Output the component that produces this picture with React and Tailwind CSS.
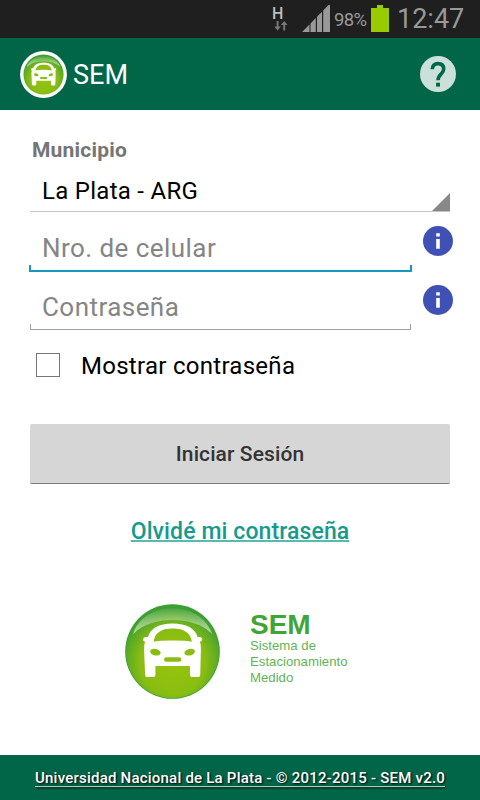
import { useState } from 'react';

function CarBadge({ id, className, ring }) {
  return (
    <svg viewBox="30 27 285 286" className={className}>
      <defs>
        <radialGradient id={`${id}-fill`} cx="50%" cy="62%" r="58%">
          <stop offset="0" stopColor="#97c40c" />
          <stop offset="0.6" stopColor="#8abd12" />
          <stop offset="0.85" stopColor="#5cab25" />
          <stop offset="1" stopColor="#3c9f31" />
        </radialGradient>
        <linearGradient id={`${id}-shine`} x1="0" y1="0" x2="0" y2="1">
          <stop offset="0" stopColor="#ffffff" stopOpacity="0.08" />
          <stop offset="1" stopColor="#ffffff" stopOpacity="0.6" />
        </linearGradient>
      </defs>
      <circle cx="172.5" cy="170" r="142.5" fill={ring ? '#ffffff' : '#3c9f31'} />
      <circle cx="172.5" cy="170" r={ring ? 122 : 140} fill={`url(#${id}-fill)`} />
      <g transform={ring ? 'translate(24.5 24) scale(0.86)' : undefined}>
        <path
          d="M54 118C68 70 116 40 172 40s104 30 120 78c-12-14-33-27-58-34-42-12-86-11-124 0-22 7-42 18-56 34z"
          fill={`url(#${id}-shine)`}
        />
        <path
          fill="#ffffff"
          fillRule="evenodd"
          d="M99 126C106 101 131 86 173 86s67 15 75 40h8q7 2 6 8-1 6-7 7 4 9 3 25l-2 73q0 8-8 8h-15q-8 0-8-8v-25H121v25q0 8-8 8H98q-8 0-8-8l-3-73q-1-16 3-25-6-1-6-7t6-8zM116 141C119 115 137 101 173 101s54 14 58 40q-14-4-58-4t-57 4z"
        />
      </g>
      <g transform={ring ? 'translate(24.5 24) scale(0.86)' : undefined} fill="#8abd12">
        <ellipse cx="121" cy="172" rx="16" ry="10" transform="rotate(12 121 172)" />
        <ellipse cx="224" cy="172" rx="16" ry="10" transform="rotate(-12 224 172)" />
        <rect x="147" y="187" width="52" height="14" rx="7" />
      </g>
    </svg>
  );
}

function InfoIcon() {
  return (
    <svg viewBox="0 0 30 30" className="w-[30px] h-[30px]">
      <circle cx="15" cy="15" r="15" fill="#3f51b5" />
      <path d="M13.2 7.3h3.6v3.1h-3.6zM13.2 13h3.6v9.7h-3.6z" fill="#ffffff" />
    </svg>
  );
}

function StatusBar() {
  return (
    <div className="h-[38px] bg-[#1f1f1f] flex items-start text-[#999999]">
      <div className="w-[18px] ml-[271px] pt-[5px] flex flex-col">
        <span className="pl-px text-[16px] leading-[17px] font-medium text-[#bdbdbd]">H</span>
        <svg viewBox="0 0 14 10" className="w-[14px] h-[10px] ml-[3px] -mt-px" fill="#777777">
          <path d="M2.6 0h2v5.5H7L3.6 9.5.2 5.5h2.4zM9.2 9.5h2V4h2.4L10.2 0 6.8 4h2.4z" />
        </svg>
      </div>
      <svg viewBox="0 0 29 28" className="w-[29px] h-[28px] ml-[13px] mt-[4px]" fill="#999999">
        <path d="M0 28L7.5 20.5V28zM8.5 19.5L13.8 14V28H8.5zM15 12.8L20 7.8V28h-5zM21.2 6.6L26 1.5q2-1.6 2 .5V28h-6.8z" />
      </svg>
      <span className="ml-[3px] mt-[9px] w-[36px] text-[18.5px] leading-[22px] tracking-[-0.6px]">98%</span>
      <svg viewBox="0 0 18 27" className="w-[18px] h-[27px] mt-[5px] ml-px" fill="#99cc00">
        <path d="M6 0h6v3h6v24H0V3h6z" />
      </svg>
      <span className="ml-[8px] mt-[3px] text-[27px] leading-[32px] whitespace-nowrap">12:47</span>
    </div>
  );
}

function Field({ label, type, active, value, onChange }) {
  return (
    <div className="flex items-start">
      <div className="w-[383px] flex flex-col">
        <input
          type={type}
          value={value}
          onChange={onChange}
          placeholder={label}
          className="h-[39px] pt-[5px] pl-[13px] text-[26px] tracking-[0.45px] outline-none bg-transparent placeholder:text-[#858585] placeholder:opacity-100"
        />
        <div
          className={
            active
              ? 'h-[7px] border-x-2 border-b-2 border-[#1896bd]'
              : 'h-[6px] mx-px border-x border-b border-[#a0a0a0]'
          }
        />
      </div>
      <div className="ml-[11px]">
        <InfoIcon />
      </div>
    </div>
  );
}

export default function App() {
  const [phone, setPhone] = useState('');
  const [password, setPassword] = useState('');
  const [showPassword, setShowPassword] = useState(false);

  return (
    <div className="w-[480px] h-[800px] flex flex-col overflow-hidden bg-white font-[Roboto,sans-serif] text-black">
      <StatusBar />

      <header className="h-[72px] bg-[#006647] flex items-center pl-[20px] pr-[24px]">
        <CarBadge id="header" ring className="w-[47px] h-[47px]" />
        <h1 className="ml-[6px] pt-[2px] text-[27px] leading-[32px] text-white">SEM</h1>
        <svg viewBox="0 0 36 36" className="w-[36px] h-[36px] ml-auto">
          <circle cx="18" cy="18" r="18" fill="#cce0da" />
          <path d="M12.3 13.3c0-3.7 2.2-5.7 5.7-5.7s5.7 2 5.7 5.4c0 4.8-5.7 5.2-5.7 11.3" fill="none" stroke="#006647" strokeWidth="3.6" />
          <path d="M16.1 26.7h3.9v3.9h-3.9z" fill="#006647" />
        </svg>
      </header>

      <main className="flex-1 flex flex-col">
        <label className="mt-[28px] ml-[32px] text-[21px] leading-[24px] tracking-[0.2px] font-bold text-[#757575]">
          Municipio
        </label>

        {/* Spinner */}
        <div className="mt-[11px] ml-[30px] w-[420px] h-[39px] flex justify-between border-b border-[#c4c4c4]">
          <span className="pl-[12px] pt-[2px] text-[24px] leading-[32px] tracking-[0.28px]">La Plata - ARG</span>
          <svg viewBox="0 0 18 18" className="w-[18px] h-[18px] self-end" fill="#888888">
            <path d="M18 0v18H0z" />
          </svg>
        </div>

        <div className="mt-[14px] ml-[29px] flex flex-col gap-[13px]">
          <Field label="Nro. de celular" type="text" active value={phone} onChange={(e) => setPhone(e.target.value)} />
          <Field
            label="Contraseña"
            type={showPassword ? 'text' : 'password'}
            value={password}
            onChange={(e) => setPassword(e.target.value)}
          />
        </div>

        <label className="mt-[19px] ml-[36px] h-[32px] flex items-center">
          <input
            type="checkbox"
            checked={showPassword}
            onChange={(e) => setShowPassword(e.target.checked)}
            className="appearance-none w-[24px] h-[24px] border border-[#777777] checked:bg-[#1896bd]"
          />
          <span className="ml-[21px] pt-[2px] text-[24px] leading-[32px] tracking-[0.28px]">Mostrar contraseña</span>
        </label>

        <button className="mt-[43px] mx-[30px] h-[60px] shrink-0 rounded-[2px] bg-[#d6d6d6] border-b border-[#7e7e7e] pt-[3px] text-[21px] tracking-[0.1px] font-medium text-[#333333]">
          Iniciar Sesión
        </button>

        <a className="mt-[34px] self-center text-[23px] leading-[28px] tracking-[0.1px] font-medium text-[#149b8c] underline decoration-[#149b8c]/70 decoration-2 underline-offset-[1px] [text-decoration-skip-ink:none]">
          Olvidé mi contraseña
        </a>

        <div className="mt-[58px] ml-[125px] flex">
          <CarBadge id="brand" className="w-[95px] h-[95px]" />
          <div className="ml-[30px] mt-[5px] font-['Liberation_Sans',Arial,sans-serif]">
            <p className="text-[28px] leading-[32px] font-bold text-[#3fa535]">SEM</p>
            <p className="-mt-[3px] text-[13.2px] leading-[16px] text-[#5fb555]">
              Sistema de
              <br />
              Estacionamiento
              <br />
              Medido
            </p>
          </div>
        </div>
      </main>

      <footer className="h-[45px] bg-[#006647] flex items-center justify-center">
        <a className="text-[15px] leading-[20px] tracking-[0.22px] font-medium text-white underline decoration-white/70 decoration-1 underline-offset-[3px] [text-decoration-skip-ink:none] [text-shadow:1px_1px_2px_#000000]">
          Universidad Nacional de La Plata - © 2012-2015 - SEM v2.0
        </a>
      </footer>
    </div>
  );
}
